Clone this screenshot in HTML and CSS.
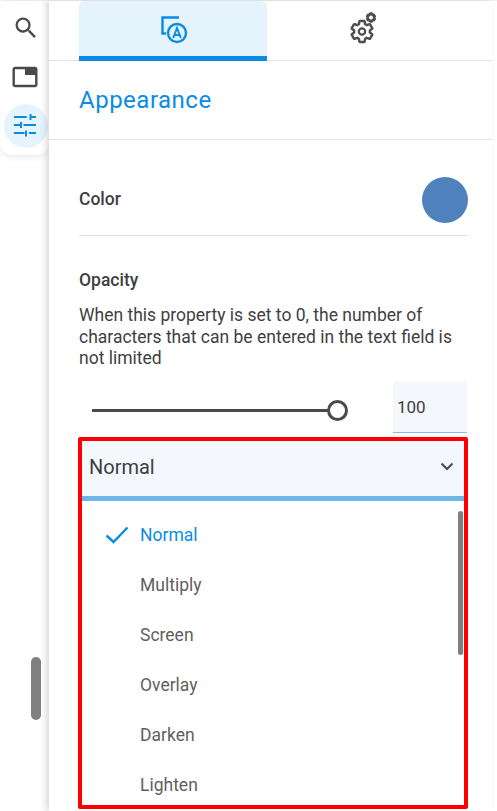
FILE: index.html
```html
<!DOCTYPE html>
<html lang="en">
<head>
<meta charset="utf-8">
<title>Appearance</title>
<link rel="stylesheet" href="styles.css">
</head>
<body>
<div class="app">
  <aside class="rail">
    <div class="rail-card">
      <button class="rail-btn">
        <svg width="28" height="28" viewBox="0 0 24 24" fill="#4a4a4a"><path d="M15.5 14h-.79l-.28-.27A6.47 6.47 0 0 0 16 9.5 6.5 6.5 0 1 0 9.5 16c1.61 0 3.09-.59 4.23-1.57l.27.28v.79l5 4.99L20.49 19l-4.99-5zm-6 0C7.01 14 5 11.99 5 9.5S7.01 5 9.5 5 14 7.01 14 9.5 11.99 14 9.5 14z"/></svg>
      </button>
      <button class="rail-btn">
        <svg class="win-icon" width="26" height="22" viewBox="0 0 26 22"><rect x="1.700" y="2" width="22.600" height="18" rx="1.500" fill="none" stroke="#4a4a4a" stroke-width="2.400"/><rect x="13" y="2" width="11" height="7" fill="#4a4a4a"/></svg>
      </button>
      <button class="rail-btn rail-btn-active">
        <svg class="win-icon" width="24" height="24" viewBox="0 0 24 24" fill="#0a8ce4"><path d="M1 2h12.700v2H1zM16.500 0h2v6h-2zM18.500 2H23v2h-4.500zM1 10h6v2H1zM7 8h2v6H7zM10.500 10H23v2H10.500zM1 18h10.500v2H1zM12 16.500h2v6h-2zM16 18h7v2h-7z"/></svg>
      </button>
    </div>
    <div class="rail-thumb"></div>
  </aside>
  <main class="panel">
    <nav class="tabs">
      <div class="tab tab-active">
        <svg width="30" height="30" viewBox="0 0 30 30" fill="none" stroke="#0a8ce4"><path d="M21 3.500H4.500V19.500H8" stroke-width="2.400"/><circle cx="19" cy="19" r="9" stroke-width="2.400"/><path d="M15.200 24l3.800-10 3.800 10M16.300 21h5.400" stroke-width="2"/></svg>
      </div>
      <div class="tab">
        <svg width="26" height="38" viewBox="0 0 26 38" fill="none" stroke="#4f4f4f">
          <defs><path id="cog" d="M19.140 12.940c.04-.3.06-.61.06-.94 0-.32-.02-.64-.07-.94l2.030-1.580c.18-.14.23-.41.12-.61l-1.920-3.320c-.12-.22-.37-.29-.59-.22l-2.390.96c-.5-.38-1.030-.7-1.620-.94l-.36-2.540c-.04-.24-.24-.41-.48-.41h-3.840c-.24 0-.43.17-.47.41l-.36 2.540c-.59.24-1.130.57-1.620.94l-2.390-.96c-.22-.08-.47 0-.59.22L2.740 8.870c-.12.21-.08.47.12.61l2.030 1.580c-.05.3-.09.63-.09.94s.02.64.07.94l-2.030 1.580c-.18.14-.23.41-.12.61l1.920 3.320c.12.22.37.29.59.22l2.390-.96c.5.38 1.030.7 1.620.94l.36 2.540c.05.24.24.41.48.41h3.840c.24 0 .44-.17.47-.41l.36-2.540c.59-.24 1.130-.56 1.620-.94l2.390.96c.22.08.47 0 .59-.22l1.920-3.320c.12-.22.07-.47-.12-.61l-2.010-1.580z"/></defs>
          <use href="#cog" transform="translate(12 19.500) scale(1.100) translate(-12 -12)" stroke-width="2.200"/>
          <circle cx="12" cy="19.500" r="3.200" stroke-width="2.200"/>
          <use href="#cog" transform="translate(21 5.500) scale(.42) translate(-12 -12)" stroke-width="5.500"/>
        </svg>
      </div>
    </nav>
    <h1 class="section-title">Appearance</h1>
    <div class="content">
      <div class="color-row">
        <span class="label color-label">Color</span>
        <span class="swatch"></span>
      </div>
      <div class="label opacity-label">Opacity</div>
      <p class="help">When this property is set to 0, the number of characters that can be entered in the text field is not limited</p>
      <div class="slider-row">
        <div class="slider"><span class="track"></span><span class="knob"></span></div>
        <div class="num-input">100</div>
      </div>
      <div class="select">
        <div class="select-head">
          <span>Normal</span>
          <svg width="14" height="9" viewBox="0 0 14 9" fill="none" stroke="#4a4a4a" stroke-width="2"><path d="M1.500 1.500L7 7l5.500-5.500"/></svg>
        </div>
        <ul class="menu">
          <li class="item item-on">
            <svg class="check" width="24" height="18" viewBox="0 0 24 18" fill="none" stroke="#0a8ce4" stroke-width="2.400"><path d="M1.500 9.500l7 6.500L22.500 1.500"/></svg>
            Normal
          </li>
          <li class="item">Multiply</li>
          <li class="item">Screen</li>
          <li class="item">Overlay</li>
          <li class="item">Darken</li>
          <li class="item">Lighten</li>
        </ul>
        <div class="menu-thumb"></div>
      </div>
    </div>
  </main>
</div>
</body>
</html>
```

FILE: styles.css
```css
* { box-sizing: border-box; }
html, body { margin: 0; height: 100%; overflow: hidden; }
body { background: #fff; font-family: Roboto, "Liberation Sans", sans-serif; color: #3f3f3f; }
.app { display: flex; height: 811px; width: 497px; border-top: 1px solid #efefef; }
.rail { position: relative; width: 49px; flex: none; background: #fefefe; }
.rail-card { height: 154px; background: #fff; border-radius: 12px; padding-top: 5px; display: flex; flex-direction: column; gap: 5px; align-items: center; box-shadow: 0 2px 6px rgba(0,0,0,.08); }
.rail-btn { width: 44px; height: 44px; padding: 0; margin: 0 0 0 2px; border: 0; border-radius: 50%; background: none; display: flex; align-items: center; justify-content: center; flex: none; }
.rail-btn-active { background: #e5f3fd; }
.win-icon { margin-right: 1px; }
.rail-thumb { position: absolute; left: 31px; top: 656px; width: 10px; height: 63px; border-radius: 5px; background: #808080; }
.panel { position: relative; width: 443px; flex: none; background: #fff; box-shadow: -3px 0 6px rgba(0,0,0,.14); }
.tabs { display: flex; height: 60px; padding-left: 30px; border-bottom: 1px solid #e2e2e2; }
.tab { width: 188px; height: 60px; display: flex; align-items: center; justify-content: center; }
.tab + .tab { width: 192px; }
.tab-active { background: #e5f3fd; border-bottom: 5px solid #0a8ce4; border-radius: 6px 6px 0 0; }
.section-title { margin: 0; height: 79px; padding: 24px 0 0 30px; font-size: 24px; line-height: 30px; font-weight: 400; letter-spacing: .5px; color: #0a8ce4; border-bottom: 1px solid #e2e2e2; }
.content { padding: 0 25px 0 30px; }
.color-row { height: 96px; padding-top: 37px; display: flex; justify-content: space-between; align-items: flex-start; border-bottom: 1px solid #e0e0e0; }
.label { font-size: 17.500px; line-height: 46px; font-weight: 500; color: #3f3f3f; }
.color-label { margin-top: -1px; }
.swatch { width: 46px; height: 46px; margin-right: -1px; border-radius: 50%; background: #4f81bd; }
.opacity-label { margin-top: 21px; }
.help { margin: 2px 0 0; font-size: 17.500px; line-height: 21.500px; color: #3f3f3f; }
.slider-row { display: flex; align-items: flex-start; justify-content: space-between; margin-top: 12px; height: 51px; }
.slider { position: relative; width: 255px; margin: 18px 0 0 13px; height: 20px; }
.track { position: absolute; left: 0; right: 0; top: 9px; height: 3px; background: #4a4a4a; }
.knob { position: absolute; right: -1px; top: 0; width: 21px; height: 21px; border-radius: 50%; background: #fff; border: 3px solid #4a4a4a; }
.num-input { width: 74px; height: 51px; background: #f4f8fc; border-bottom: 1px solid #8fbbdd; padding: 15px 0 0 4px; font-size: 17px; line-height: 20px; }
.select { position: relative; margin: 4px 0 0 -1px; width: 389.500px; height: 372px; border: 4px solid #f00; border-radius: 2px; overflow: hidden; }
.select-head { height: 60px; background: #f4f8fc; border-bottom: 5px solid #6cb6e8; display: flex; align-items: center; justify-content: space-between; padding: 0 10px 3px 7px; font-size: 20px; color: #3f3f3f; }
.menu { list-style: none; margin: 0; padding: 9px 0 0; background: #fff; }
.item { position: relative; height: 50px; padding-left: 58px; font-size: 17.500px; line-height: 50px; color: #5f5f5f; }
.item-on { color: #0a8ce4; }
.check { position: absolute; left: 23px; top: 16px; }
.menu-thumb { position: absolute; right: 1px; top: 70px; width: 5px; height: 144px; border-radius: 3px; background: #808080; }
```
